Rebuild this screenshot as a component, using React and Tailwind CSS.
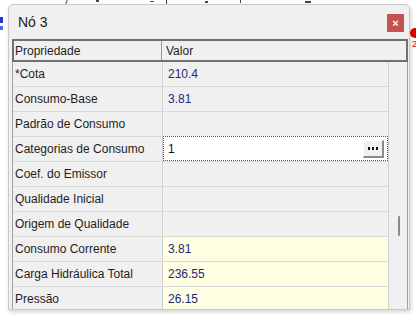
import React from 'react';

const rows = [
  { label: '*Cota', value: '210.4' },
  { label: 'Consumo-Base', value: '3.81' },
  { label: 'Padrão de Consumo', value: '' },
  { label: 'Categorias de Consumo', value: '1', edit: true },
  { label: 'Coef. do Emissor', value: '' },
  { label: 'Qualidade Inicial', value: '' },
  { label: 'Origem de Qualidade', value: '' },
  { label: 'Consumo Corrente', value: '3.81', result: true },
  { label: 'Carga Hidráulica Total', value: '236.55', result: true },
  { label: 'Pressão', value: '26.15', result: true },
];

function Row({ row }) {
  return (
    <div className="flex h-[25px] shrink-0 border-b border-[#d9d9d9]">
      <div className="w-[150px] flex items-center pl-[2px] border-r border-[#cfcfcf] text-[#1e1e1e]">
        {row.label}
      </div>
      {row.edit ? (
        <div className="flex-1 flex items-center bg-white border border-dotted border-[#555] pl-[4px] pr-[3px] -mt-[1px]">
          <span className="flex-1 text-[#111]">{row.value}</span>
          <div className="w-[21px] h-[18px] flex items-center justify-center gap-[2px] bg-[#f0f0f0] border-r-2 border-b-2 border-[#8a8a8a] border-t border-l border-t-white border-l-white">
            <span className="w-[2px] h-[3px] bg-[#111]" />
            <span className="w-[2px] h-[3px] bg-[#111]" />
            <span className="w-[2px] h-[3px] bg-[#111]" />
          </div>
        </div>
      ) : (
        <div className={`flex-1 flex items-center pl-[5px] text-[#26267a] ${row.result ? 'bg-[#ffffe3]' : ''}`}>
          {row.value}
        </div>
      )}
    </div>
  );
}

export default function App() {
  return (
    <div
      className="relative w-[416px] h-[317px] bg-white overflow-hidden text-[12px]"
      style={{ fontFamily: '"Liberation Sans", Arial, sans-serif' }}
    >
      {/* map remnants behind the dialog */}
      <div className="absolute left-[66px] top-0 w-[1px] h-[4px] bg-[#444] rotate-[25deg]" />
      <div className="absolute left-[96px] top-0 w-[3px] h-[2px] bg-[#444]" />
      <div className="absolute left-[150px] top-[1px] w-[4px] h-[1px] bg-[#444]" />
      <div className="absolute left-[166px] top-0 w-[1px] h-[4px] bg-[#444]" />
      <div className="absolute left-[205px] top-[1px] w-[3px] h-[2px] bg-[#444]" />
      <div className="absolute left-[240px] top-0 w-[1px] h-[3px] bg-[#444]" />
      <div className="absolute left-[305px] top-[1px] w-[6px] h-[2px] bg-[#444]" />
      <div className="absolute left-0 top-[17px] w-[3px] h-[6px] bg-[#2233cc]" />
      <div className="absolute left-0 top-[26px] w-[3px] h-[4px] bg-[#5566dd]" />
      <div className="absolute left-[410px] top-[28px] w-[10px] h-[10px] rounded-full bg-[#e00000]" />
      <div className="absolute left-[412px] top-[40px] text-[9px] leading-none text-[#d00000]">2</div>

      {/* dialog window */}
      <div className="absolute left-[8px] top-[4px] w-[402px] h-[306px] flex flex-col bg-[#f0f0f0] border border-[#c9c9c9] rounded-t-[5px] shadow-[1px_2px_4px_rgba(0,0,0,0.18)] overflow-hidden">
        <div className="h-[34px] shrink-0 flex items-center justify-between pl-[9px] pr-[5px]">
          <span className="text-[14px] text-[#1a1a1a]">Nó 3</span>
          <div className="w-[17px] h-[18px] bg-[#c75050] flex items-center justify-center text-white text-[11px] font-bold leading-none mt-[2px]">
            ×
          </div>
        </div>

        <div className="ml-[3px] mr-[1px] flex-1 flex flex-col min-h-0">
          <div className="h-[23px] shrink-0 flex border-2 border-[#6f6f6f] bg-[#f0f0f0] text-[#1e1e1e]">
            <div className="w-[148px] flex items-center pl-[1px] border-r border-[#9a9a9a]">Propriedade</div>
            <div className="flex-1 flex items-center pl-[4px]">Valor</div>
          </div>
          <div className="flex-1 flex min-h-0 border-l border-r border-[#a0a0a0]">
            <div className="w-[375px] flex flex-col overflow-hidden">
              {rows.map((r) => (
                <Row key={r.label} row={r} />
              ))}
            </div>
            <div className="flex-1 border-l border-[#d0d0d0] bg-[#f0f0f0] relative">
              <div className="absolute left-[9px] top-[154px] w-[2px] h-[20px] rounded-full bg-[#8a8a8a]" />
            </div>
          </div>
        </div>
      </div>
    </div>
  );
}
